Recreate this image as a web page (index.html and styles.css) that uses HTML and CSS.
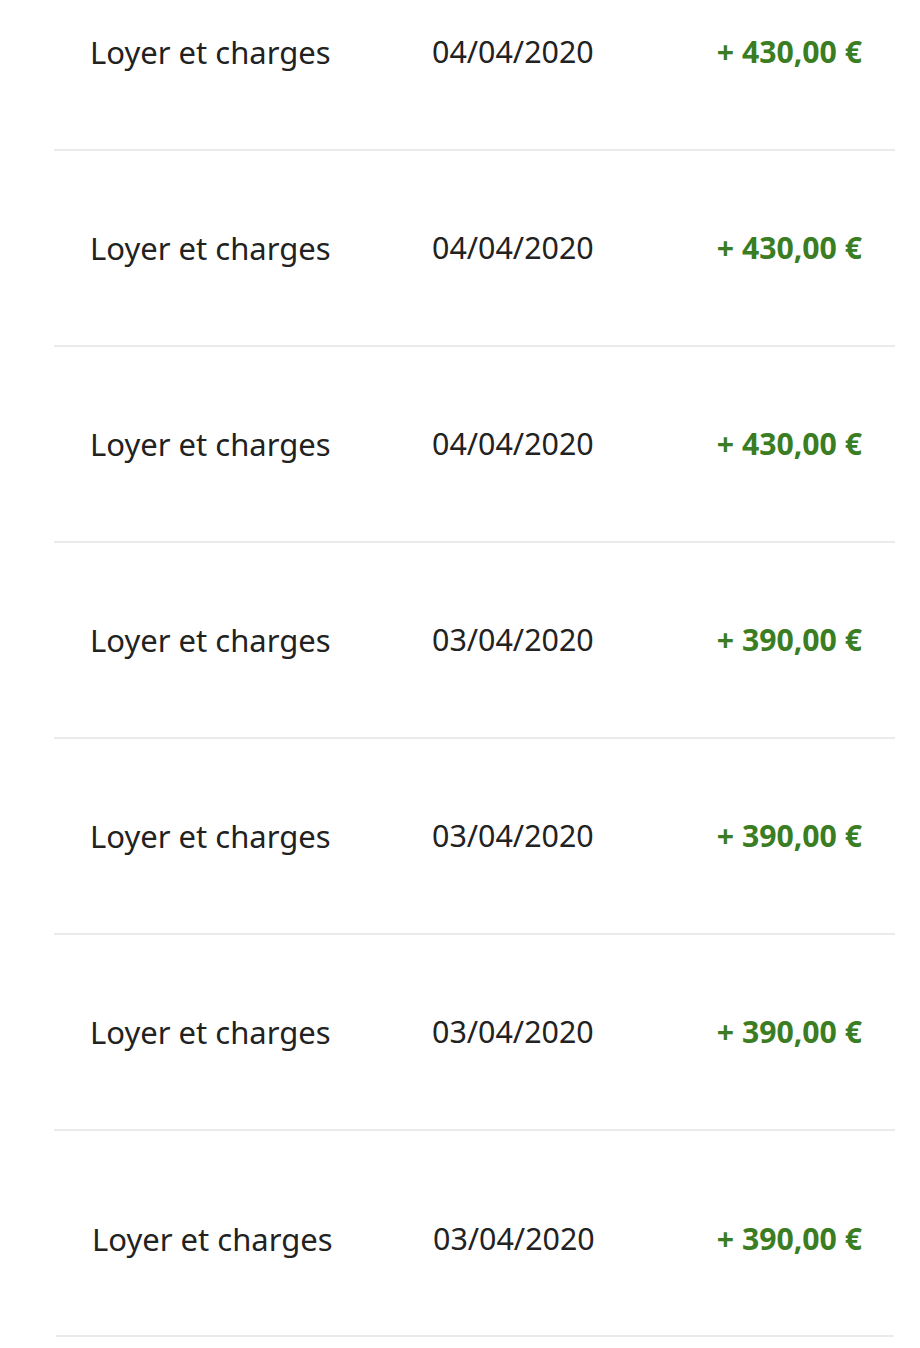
FILE: index.html
```html
<!DOCTYPE html>
<html lang="fr">
<head>
<meta charset="utf-8">
<link rel="stylesheet" href="styles.css">
</head>
<body>
<ul class="list">
  <li class="row"><span class="label">Loyer et charges</span><span class="date">04/04/2020</span><span class="amount">+ 430,00 €</span></li>
  <li class="row"><span class="label">Loyer et charges</span><span class="date">04/04/2020</span><span class="amount">+ 430,00 €</span></li>
  <li class="row"><span class="label">Loyer et charges</span><span class="date">04/04/2020</span><span class="amount">+ 430,00 €</span></li>
  <li class="row"><span class="label">Loyer et charges</span><span class="date">03/04/2020</span><span class="amount">+ 390,00 €</span></li>
  <li class="row"><span class="label">Loyer et charges</span><span class="date">03/04/2020</span><span class="amount">+ 390,00 €</span></li>
  <li class="row"><span class="label">Loyer et charges</span><span class="date">03/04/2020</span><span class="amount">+ 390,00 €</span></li>
  <li class="row row-last"><span class="label">Loyer et charges</span><span class="date">03/04/2020</span><span class="amount">+ 390,00 €</span></li>
</ul>
</body>
</html>
```
FILE: styles.css
```css
html, body {
  margin: 0;
  padding: 0;
  background: #ffffff;
}
body {
  font-family: "Noto Sans", "Open Sans", sans-serif;
  color: #222222;
  overflow: hidden;
}
.list {
  list-style: none;
  margin: -45px 25px 0 54px;
  padding: 0;
}
.row {
  display: grid;
  grid-template-columns: 342px 1fr auto;
  align-items: center;
  height: 194px;
  padding: 0 33px 0 36px;
  border-bottom: 2px solid #ebebeb;
  font-size: 31px;
  line-height: 42px;
}
.row-last {
  height: 192px;
  padding-top: 12px;
  padding-left: 36px;
  padding-right: 32px;
  margin-left: 2px;
  margin-right: 1px;
  grid-template-columns: 341px 1fr auto;
}
.label {
  white-space: nowrap;
}
.date {
  white-space: nowrap;
  font-size: 30.4px;
}
.amount {
  font-weight: 700;
  color: #3a7d22;
  font-size: 30.2px;
  white-space: nowrap;
}
```
